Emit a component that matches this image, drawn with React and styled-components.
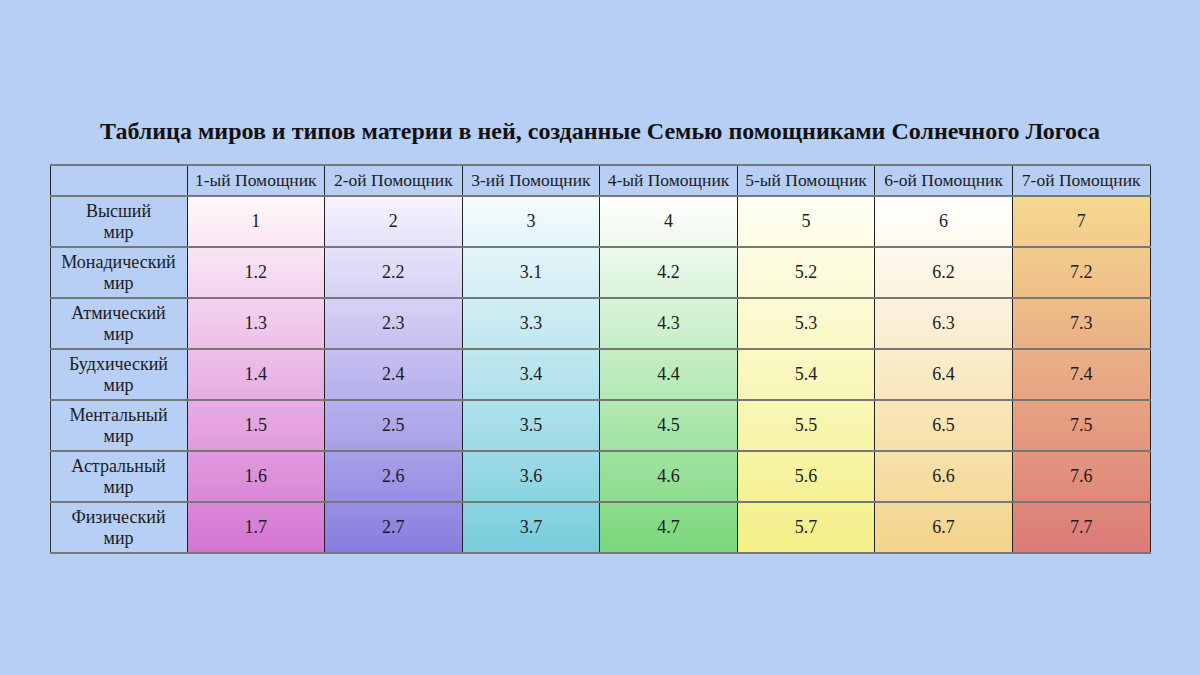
import React from "react";
import styled, { createGlobalStyle } from "styled-components";

const GlobalStyle = createGlobalStyle`
  html, body {
    margin: 0;
    padding: 0;
    background: #b7cff5;
  }
`;

const Page = styled.div`
  width: 1200px;
  height: 675px;
  background: #b7cff5;
  font-family: "Liberation Serif", "Times New Roman", serif;
  color: #1c1c24;
  display: flex;
  flex-direction: column;
  align-items: center;
  padding-top: 116px;
  box-sizing: border-box;
`;

const Title = styled.h1`
  margin: 0 0 18px;
  font-size: 24px;
  font-weight: bold;
  line-height: 30px;
  color: #111;
  white-space: nowrap;
`;

const Table = styled.table`
  border-collapse: collapse;
  table-layout: fixed;
  width: 1101px;
  border-left: 1px solid #333;
  border-right: 1px solid #333;
`;

const HeadCell = styled.th`
  height: 29px;
  padding: 0;
  font-weight: normal;
  font-size: 17.5px;
  text-align: center;
  white-space: nowrap;
  border-top: 2px solid #777;
  border-bottom: 2px solid #777;
  border-left: 1px solid #222;
  border-right: 1px solid #222;
  background: #b7cff5;
`;

const Label = styled.td`
  height: 49px;
  padding: 0;
  font-size: 18px;
  line-height: 21px;
  text-align: center;
  border-top: 2px solid #777;
  border-bottom: 2px solid #777;
  border-right: 1px solid #222;
  background: #b7cff5;

  span {
    display: block;
  }
`;

const Cell = styled.td`
  height: 49px;
  padding: 0;
  font-size: 18px;
  text-align: center;
  border-top: 2px solid #777;
  border-bottom: 2px solid #777;
  border-left: 1px solid #222;
  border-right: 1px solid #222;
  background: linear-gradient(${(p) => p.$from}, ${(p) => p.$to});
`;

const columns = [
  ["#fff8f9", "#d474d2"],
  ["#f5f3fd", "#877ddf"],
  ["#f5fcfe", "#78ccdc"],
  ["#ffffff", "#7ad67a"],
  ["#fffff4", "#f3ef86"],
  ["#ffffff", "#f3d38a"],
  ["#f6d98f", "#db7a77"],
];

const rows = [
  ["Высший", "мир"],
  ["Монадический", "мир"],
  ["Атмический", "мир"],
  ["Будхический", "мир"],
  ["Ментальный", "мир"],
  ["Астральный", "мир"],
  ["Физический", "мир"],
];

const headers = [
  "1-ый Помощник",
  "2-ой Помощник",
  "3-ий Помощник",
  "4-ый Помощник",
  "5-ый Помощник",
  "6-ой Помощник",
  "7-ой Помощник",
];

const hex = (c) => [1, 3, 5].map((i) => parseInt(c.slice(i, i + 2), 16));

const mix = (a, b, t) => {
  const x = hex(a);
  const y = hex(b);
  const m = x.map((v, i) => Math.round(v + (y[i] - v) * t));
  return `rgb(${m.join(",")})`;
};

const value = (col, row) => {
  if (row === 0) return String(col + 1);
  if (col === 2 && row === 1) return "3.1";
  return `${col + 1}.${row + 1}`;
};

export default function App() {
  return (
    <Page>
      <GlobalStyle />
      <Title>
        Таблица миров и типов материи в ней, созданные Семью помощниками
        Солнечного Логоса
      </Title>
      <Table>
        <colgroup>
          <col style={{ width: 137 }} />
          {headers.map((h) => (
            <col key={h} />
          ))}
        </colgroup>
        <thead>
          <tr>
            <HeadCell />
            {headers.map((h) => (
              <HeadCell key={h}>{h}</HeadCell>
            ))}
          </tr>
        </thead>
        <tbody>
          {rows.map((r, ri) => (
            <tr key={r[0]}>
              <Label>
                <span>{r[0]}</span>
                <span>{r[1]}</span>
              </Label>
              {columns.map(([top, bottom], ci) => (
                <Cell
                  key={ci}
                  $from={mix(top, bottom, ri / 7)}
                  $to={mix(top, bottom, (ri + 1) / 7)}
                >
                  {value(ci, ri)}
                </Cell>
              ))}
            </tr>
          ))}
        </tbody>
      </Table>
    </Page>
  );
}
